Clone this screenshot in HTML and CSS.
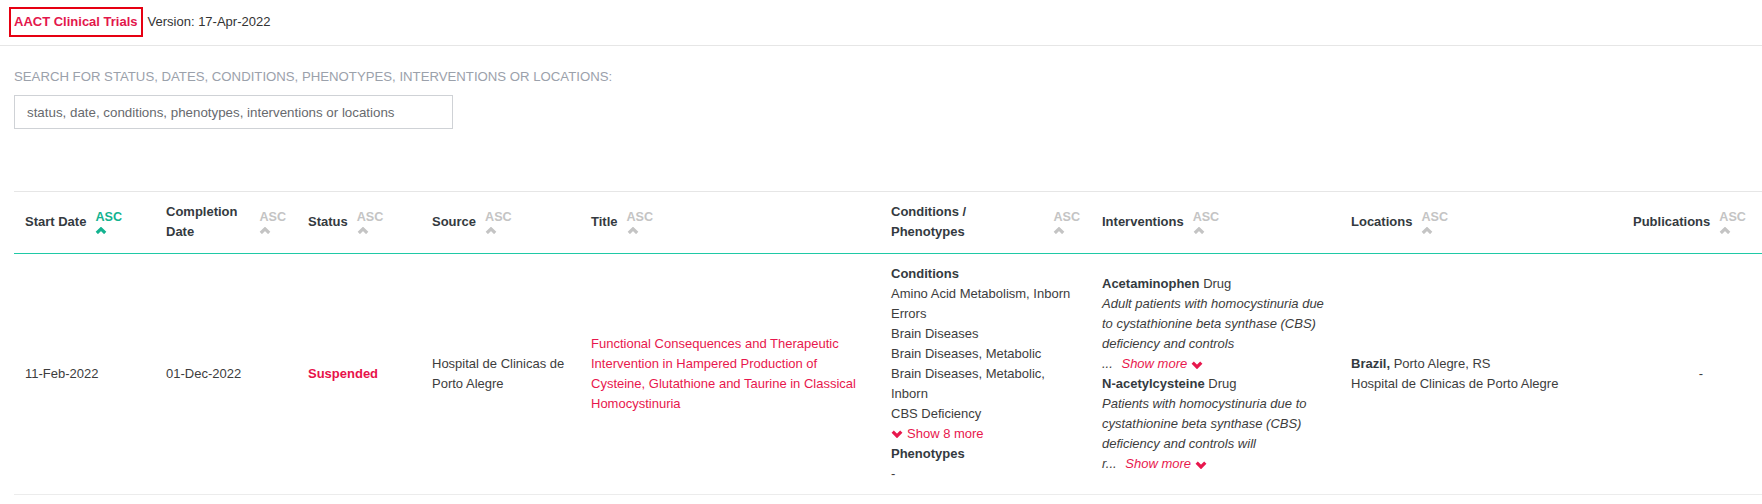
FILE: index.html
```html
<!DOCTYPE html>
<html lang="en">
<head>
<meta charset="utf-8">
<title>AACT Clinical Trials</title>
<link rel="stylesheet" href="styles.css">
</head>
<body>
<header class="topbar">
  <a class="brand" href="#">AACT Clinical Trials</a>
  <span class="version">Version: 17-Apr-2022</span>
</header>
<main class="main">
  <label class="search-label" for="q">SEARCH FOR STATUS, DATES, CONDITIONS, PHENOTYPES, INTERVENTIONS OR LOCATIONS:</label>
  <input class="search-input" id="q" type="text" placeholder="status, date, conditions, phenotypes, interventions or locations">

  <div class="table-wrap">
    <table class="trials">
      <colgroup>
        <col class="c-start"><col class="c-completion"><col class="c-status"><col class="c-source"><col class="c-title"><col class="c-conditions"><col class="c-interventions"><col class="c-locations"><col class="c-publications">
      </colgroup>
      <thead>
        <tr>
          <th><div class="th-inner"><span class="th-label">Start Date</span><span class="sort active">ASC<svg class="chev-up" viewBox="0 0 12 7" width="12" height="7"><polyline points="1.8,6 6,1.9 10.2,6"/></svg></span></div></th>
          <th><div class="th-inner"><span class="th-label">Completion Date</span><span class="sort">ASC<svg class="chev-up" viewBox="0 0 12 7" width="12" height="7"><polyline points="1.8,6 6,1.9 10.2,6"/></svg></span></div></th>
          <th><div class="th-inner"><span class="th-label">Status</span><span class="sort">ASC<svg class="chev-up" viewBox="0 0 12 7" width="12" height="7"><polyline points="1.8,6 6,1.9 10.2,6"/></svg></span></div></th>
          <th><div class="th-inner"><span class="th-label">Source</span><span class="sort">ASC<svg class="chev-up" viewBox="0 0 12 7" width="12" height="7"><polyline points="1.8,6 6,1.9 10.2,6"/></svg></span></div></th>
          <th><div class="th-inner"><span class="th-label">Title</span><span class="sort">ASC<svg class="chev-up" viewBox="0 0 12 7" width="12" height="7"><polyline points="1.8,6 6,1.9 10.2,6"/></svg></span></div></th>
          <th><div class="th-inner"><span class="th-label th-wide">Conditions /<br>Phenotypes</span><span class="sort">ASC<svg class="chev-up" viewBox="0 0 12 7" width="12" height="7"><polyline points="1.8,6 6,1.9 10.2,6"/></svg></span></div></th>
          <th><div class="th-inner"><span class="th-label">Interventions</span><span class="sort">ASC<svg class="chev-up" viewBox="0 0 12 7" width="12" height="7"><polyline points="1.8,6 6,1.9 10.2,6"/></svg></span></div></th>
          <th><div class="th-inner"><span class="th-label">Locations</span><span class="sort">ASC<svg class="chev-up" viewBox="0 0 12 7" width="12" height="7"><polyline points="1.8,6 6,1.9 10.2,6"/></svg></span></div></th>
          <th><div class="th-inner"><span class="th-label">Publications</span><span class="sort">ASC<svg class="chev-up" viewBox="0 0 12 7" width="12" height="7"><polyline points="1.8,6 6,1.9 10.2,6"/></svg></span></div></th>
        </tr>
      </thead>
      <tbody>
        <tr>
          <td>11-Feb-2022</td>
          <td>01-Dec-2022</td>
          <td class="status">Suspended</td>
          <td>Hospital de Clinicas de Porto Alegre</td>
          <td><a class="title-link" href="#">Functional Consequences and Therapeutic Intervention in Hampered Production of Cysteine, Glutathione and Taurine in Classical Homocystinuria</a></td>
          <td>
            <div class="sub-head">Conditions</div>
            <div>Amino Acid Metabolism, Inborn Errors</div>
            <div>Brain Diseases</div>
            <div>Brain Diseases, Metabolic</div>
            <div>Brain Diseases, Metabolic, Inborn</div>
            <div>CBS Deficiency</div>
            <a class="show-more" href="#"><svg class="chev-down" viewBox="0 0 12 8" width="12" height="8"><polyline points="1.7,1.7 6,6 10.3,1.7"/></svg>Show 8 more</a>
            <div class="sub-head">Phenotypes</div>
            <div>-</div>
          </td>
          <td>
            <div><b>Acetaminophen</b> Drug</div>
            <div class="desc"><i>Adult patients with homocystinuria due to cystathionine beta synthase (CBS) deficiency and controls </i><span class="nowrap"><i>...</i> <a class="more-link" href="#">Show more<svg class="chev-down" viewBox="0 0 12 8" width="12" height="8"><polyline points="1.7,1.7 6,6 10.3,1.7"/></svg></a></span></div>
            <div><b>N-acetylcysteine</b> Drug</div>
            <div class="desc"><i>Patients with homocystinuria due to cystathionine beta synthase (CBS) deficiency and controls will </i><span class="nowrap"><i>r...</i> <a class="more-link" href="#">Show more<svg class="chev-down" viewBox="0 0 12 8" width="12" height="8"><polyline points="1.7,1.7 6,6 10.3,1.7"/></svg></a></span></div>
          </td>
          <td>
            <div><b>Brazil,</b> Porto Alegre, RS</div>
            <div>Hospital de Clinicas de Porto Alegre</div>
          </td>
          <td class="pubs">-</td>
        </tr>
      </tbody>
    </table>
  </div>
</main>
</body>
</html>
```
FILE: styles.css
```css
* { box-sizing: border-box; }

html, body {
  margin: 0;
  padding: 0;
  background: #ffffff;
}

body {
  font-family: "Liberation Sans", Arial, Helvetica, sans-serif;
  font-size: 13px;
  line-height: 20px;
  color: #3d3d3d;
}

a { text-decoration: none; }

.topbar {
  display: flex;
  align-items: center;
  gap: 5px;
  padding: 7px 9px 8px;
  border-bottom: 1px solid #e6e6e6;
}

.brand {
  border: 2px solid #e60012;
  padding: 5px 3px;
  line-height: 16px;
  font-weight: bold;
  color: #e3164b;
}

.version {
  color: #333333;
  line-height: 16px;
}

.main {
  padding: 0 0 0 14px;
}

.search-label {
  display: block;
  margin-top: 21px;
  color: #9ba1ab;
  font-size: 13.2px;
  line-height: 20px;
}

.search-input {
  display: block;
  margin-top: 8px;
  width: 439px;
  height: 34px;
  padding: 0 12px;
  border: 1px solid #cfd2d6;
  border-radius: 0;
  font-family: inherit;
  font-size: 13.333px;
  color: #333;
  outline: none;
}

.search-input::placeholder {
  color: #676a6e;
  opacity: 1;
}

.table-wrap {
  margin-top: 62px;
  overflow: hidden;
}

.trials {
  width: 1766px;
  table-layout: fixed;
  border-collapse: separate;
  border-spacing: 0;
}

.c-start { width: 141px; }
.c-completion { width: 142px; }
.c-status { width: 124px; }
.c-source { width: 159px; }
.c-title { width: 300px; }
.c-conditions { width: 211px; }
.c-interventions { width: 249px; }
.c-locations { width: 282px; }
.c-publications { width: 158px; }

.trials th {
  padding: 10px 11px 11px;
  border-top: 1px solid #e6e6e6;
  border-bottom: 1px solid #1fc9a6;
  text-align: left;
  vertical-align: middle;
  font-weight: bold;
  color: #343a40;
}

.th-inner {
  display: flex;
  align-items: center;
  gap: 9px;
}

.th-label {
  flex: 0 1 auto;
  line-height: 20px;
}

.th-wide { flex: 1 1 auto; }

.sort {
  flex: 0 0 auto;
  display: flex;
  flex-direction: column;
  align-items: flex-start;
  font-size: 12.6px;
  line-height: 14px;
  font-weight: bold;
  color: #c4c4c4;
}

.sort.active { color: #13b390; }

.chev-up {
  display: block;
  margin-top: 3px;
  fill: none;
  stroke: currentColor;
  stroke-width: 3.2;
}

.trials td {
  padding: 10px 11px;
  border-bottom: 1px solid #ececec;
  vertical-align: middle;
  text-align: left;
}

.status {
  font-weight: bold;
  color: #e8124a;
}

.title-link { color: #e8174d; }

.sub-head {
  font-weight: bold;
  color: #343a40;
}

b { color: #343a40; }

.show-more {
  display: inline-flex;
  align-items: center;
  color: #e8174d;
}

.show-more .chev-down { margin-right: 4px; }

.chev-down {
  display: inline-block;
  fill: none;
  stroke: currentColor;
  stroke-width: 3.2;
}

.desc i { color: #3d3d3d; }

.nowrap { white-space: nowrap; }

.more-link {
  margin-left: 5px;
  font-style: italic;
  color: #e8174d;
}

.more-link .chev-down {
  margin-left: 4px;
  vertical-align: -1px;
}

.pubs { text-align: center !important; }
```
